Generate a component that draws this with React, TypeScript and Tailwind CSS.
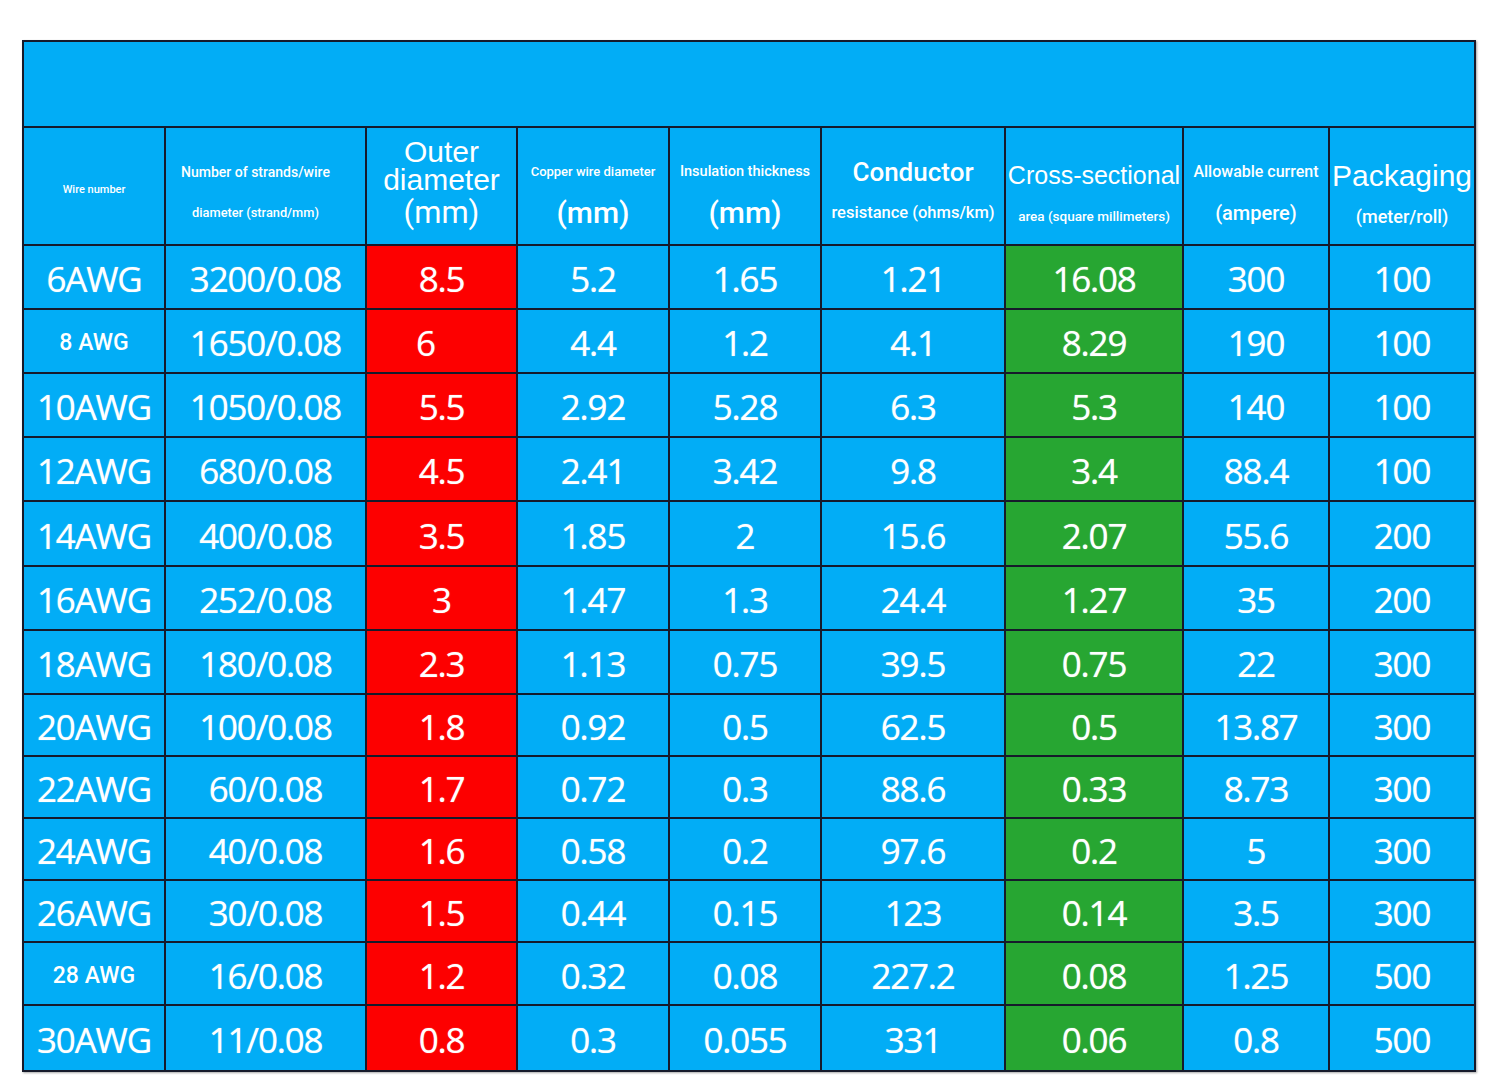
const rows = [
  ["6AWG", "3200/0.08", "8.5", "5.2", "1.65", "1.21", "16.08", "300", "100"],
  ["8 AWG", "1650/0.08", "6", "4.4", "1.2", "4.1", "8.29", "190", "100"],
  ["10AWG", "1050/0.08", "5.5", "2.92", "5.28", "6.3", "5.3", "140", "100"],
  ["12AWG", "680/0.08", "4.5", "2.41", "3.42", "9.8", "3.4", "88.4", "100"],
  ["14AWG", "400/0.08", "3.5", "1.85", "2", "15.6", "2.07", "55.6", "200"],
  ["16AWG", "252/0.08", "3", "1.47", "1.3", "24.4", "1.27", "35", "200"],
  ["18AWG", "180/0.08", "2.3", "1.13", "0.75", "39.5", "0.75", "22", "300"],
  ["20AWG", "100/0.08", "1.8", "0.92", "0.5", "62.5", "0.5", "13.87", "300"],
  ["22AWG", "60/0.08", "1.7", "0.72", "0.3", "88.6", "0.33", "8.73", "300"],
  ["24AWG", "40/0.08", "1.6", "0.58", "0.2", "97.6", "0.2", "5", "300"],
  ["26AWG", "30/0.08", "1.5", "0.44", "0.15", "123", "0.14", "3.5", "300"],
  ["28 AWG", "16/0.08", "1.2", "0.32", "0.08", "227.2", "0.08", "1.25", "500"],
  ["30AWG", "11/0.08", "0.8", "0.3", "0.055", "331", "0.06", "0.8", "500"],
];

const cellBg = (i: number) =>
  i === 2 ? "bg-[#fd0000]" : i === 6 ? "bg-[#27a632]" : "bg-[#02adf6]";

const roboto = "font-['Roboto','Liberation_Sans',sans-serif]";
const arial = "font-['Liberation_Sans','Arial',sans-serif]";

const Two = ({
  top,
  bottom,
  topCls,
  bottomCls,
  pt = "pt-[32px]",
  shift = "",
}: {
  top: string;
  bottom: string;
  topCls: string;
  bottomCls: string;
  pt?: string;
  shift?: string;
}) => (
  <div className={`bg-[#02adf6] text-white flex flex-col items-center ${pt} ${shift}`}>
    <div className={`h-[24px] leading-[24px] flex items-center justify-center whitespace-nowrap ${topCls}`}>
      {top}
    </div>
    <div className={`h-[24px] leading-[24px] mt-[17px] flex items-center justify-center whitespace-nowrap ${bottomCls}`}>
      {bottom}
    </div>
  </div>
);

export default function App() {
  return (
    <div className="bg-white w-[1500px] h-[1086px] pt-[40px] pl-[22px]">
      <div className="w-[1454px] bg-[#161a2b] p-[2px] grid gap-[2px] grid-cols-[140px_199px_149px_150px_150px_182px_176px_144px_144px] grid-rows-[84px_116px_62px_62px_62px_62px_63px_62px_62px_60px_60px_60px_60px_61px_64px] shadow-[1px_1px_2px_rgba(0,0,0,0.35)]">
        <div className="col-span-9 bg-[#02adf6]" />

        {/* header */}
        <div className={`bg-[#02adf6] text-white flex items-center justify-center pt-[8px] text-[11px] font-medium ${roboto}`}>
          Wire number
        </div>
        <Two
          top="Number of strands/wire"
          bottom="diameter (strand/mm)"
          topCls={`text-[14px] font-medium ${roboto}`}
          bottomCls={`text-[12.8px] font-medium ${roboto}`}
          shift="pr-[20px]"
        />
        <div className="bg-[#02adf6] text-white flex flex-col items-center pt-[10px]">
          <div className={`h-[28px] leading-[28px] flex items-center text-[30px] ${arial}`}>Outer</div>
          <div className={`h-[28px] leading-[28px] flex items-center text-[30px] ${arial}`}>diameter</div>
          <div className={`h-[28px] leading-[28px] mt-[5px] flex items-center text-[31px] ${roboto}`}>(mm)</div>
        </div>
        <Two
          top="Copper wire diameter"
          bottom="(mm)"
          topCls={`text-[13px] font-medium ${roboto}`}
          bottomCls={`text-[30px] font-medium ${roboto}`}
        />
        <Two
          top="Insulation thickness"
          bottom="(mm)"
          topCls={`text-[14.5px] font-medium ${roboto}`}
          bottomCls={`text-[30px] font-medium ${roboto}`}
        />
        <Two
          top="Conductor"
          bottom="resistance (ohms/km)"
          topCls={`text-[26px] font-medium ${roboto}`}
          bottomCls={`text-[16.5px] font-medium ${roboto}`}
        />
        <Two
          top="Cross-sectional"
          bottom="area (square millimeters)"
          topCls={`text-[25px] ${arial}`}
          bottomCls={`text-[13.5px] font-medium ${roboto}`}
          pt="pt-[35px]"
        />
        <Two
          top="Allowable current"
          bottom="(ampere)"
          topCls={`text-[16px] font-medium ${roboto}`}
          bottomCls={`text-[20px] font-medium ${roboto}`}
        />
        <Two
          top="Packaging"
          bottom="(meter/roll)"
          topCls={`text-[30px] ${arial}`}
          bottomCls={`text-[18px] font-medium ${roboto}`}
          pt="pt-[36px]"
        />

        {/* data */}
        {rows.map((r, ri) =>
          r.map((v, ci) => (
            <div
              key={`${ri}-${ci}`}
              className={`${cellBg(ci)} text-white flex items-center justify-center whitespace-nowrap ${ri === 1 && ci === 2 ? "pr-[32px]" : ""}`}
            >
              {v.includes(" ") ? (
                <span className={`text-[23px] font-medium pt-[5px] ${roboto}`}>{v}</span>
              ) : (
                <span className="font-['Open_Sans','Noto_Sans',sans-serif] text-[35px] leading-none tracking-[-1.2px] pt-[3px] [text-shadow:0_0_1px_rgba(255,255,255,0.7)]">
                  {v}
                </span>
              )}
            </div>
          ))
        )}
      </div>
    </div>
  );
}
